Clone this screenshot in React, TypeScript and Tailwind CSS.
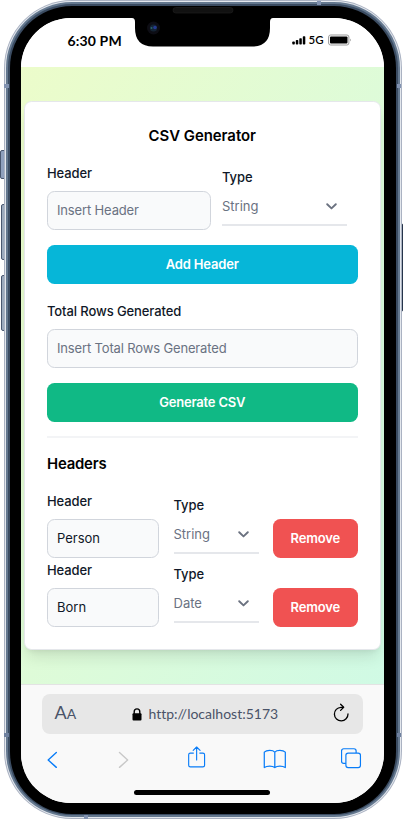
import type { ReactNode } from "react";

function Label({ children }: { children: ReactNode }) {
  return <div className="h-[19px] text-[13px] leading-[19px] font-medium tracking-[-0.1px] text-gray-900">{children}</div>;
}

function Select({ value }: { value: string }) {
  return (
    <div className="mt-[1px] flex h-[38px] items-center border-b-2 border-gray-200 text-[13px] text-gray-500">
      <span className="mt-[2px] flex-1">{value}</span>
      <svg className="mt-[1px] mr-[10px]" width="11" height="7" viewBox="0 0 11 7" fill="none" stroke="#6b7280" strokeWidth="1.9" strokeLinecap="round" strokeLinejoin="round">
        <path d="M1.2 1.2 5.5 5.4 9.8 1.2" />
      </svg>
    </div>
  );
}

function HeaderRow({ name, type }: { name: string; type: string }) {
  return (
    <div className="flex h-[69px] items-start">
      <div className="w-[112px]">
        <Label>Header</Label>
        <div className="mt-[8px] flex h-[39px] items-center rounded-[7.5px] border border-gray-300 bg-gray-50 px-[9px] text-[13px] text-gray-900">{name}</div>
      </div>
      <div className="mt-[4px] ml-[14.5px] w-[85px]">
        <Label>Type</Label>
        <Select value={type} />
      </div>
      <button className="mt-[27px] ml-auto h-[39px] w-[84.5px] rounded-[7.5px] bg-[#f05252] text-[13px] font-semibold tracking-[-0.15px] text-white">Remove</button>
    </div>
  );
}

function Card() {
  return (
    <div className="mx-[3px] mt-[34px] h-[549px] rounded-[7.5px] border border-gray-200 bg-white px-[22px] shadow-lg">
      <h1 className="mt-[23px] text-center text-[14.9px] leading-[22px] font-semibold text-black">CSV Generator</h1>
      <div className="mt-[17px] flex h-[81px]">
        <div className="w-[164px]">
          <Label>Header</Label>
          <div className="mt-[8px] flex h-[39px] items-center rounded-[7.5px] border border-gray-300 bg-gray-50 px-[9px] text-[13px] tracking-[-0.15px] text-gray-500">Insert Header</div>
        </div>
        <div className="mt-[4px] ml-[11px] w-[125px]">
          <Label>Type</Label>
          <Select value="String" />
        </div>
      </div>
      <button className="h-[39px] w-full rounded-[7.5px] bg-[#06b6d8] text-[13px] font-semibold tracking-[-0.15px] text-white">Add Header</button>
      <div className="mt-[18px]">
        <Label>Total Rows Generated</Label>
      </div>
      <div className="mt-[8px] flex h-[39px] items-center rounded-[7.5px] border border-gray-300 bg-gray-50 px-[9px] text-[13px] tracking-[-0.15px] text-gray-500">Insert Total Rows Generated</div>
      <button className="mt-[15px] h-[39px] w-full rounded-[7.5px] bg-[#10b985] text-[13px] font-semibold tracking-[-0.2px] text-white">Generate CSV</button>
      <div className="mt-[14px] h-[2px] bg-gray-100" />
      <h2 className="mt-[15px] mb-[17px] text-[14.9px] leading-[22px] font-semibold tracking-[-0.2px] text-black">Headers</h2>
      <HeaderRow name="Person" type="String" />
      <HeaderRow name="Born" type="Date" />
    </div>
  );
}

function StatusBar() {
  return (
    <div className="flex h-[49px] items-center bg-white pl-[46.5px] text-black">
      <span className="mt-[-4px] w-[224px] font-['Lato',sans-serif] text-[14px] font-bold tracking-[0.15px]">6:30 PM</span>
      <svg className="mt-[-4px]" width="14" height="9" viewBox="0 0 14 9">
        <rect x="0.3" y="5.5" width="2.5" height="3" rx="0.7" />
        <rect x="3.8" y="4" width="2.5" height="4.5" rx="0.7" />
        <rect x="7.3" y="2.2" width="2.5" height="6.3" rx="0.7" />
        <rect x="10.8" y="0.3" width="2.5" height="8.2" rx="0.7" />
      </svg>
      <span className="mt-[-5px] ml-[3px] w-[19px] font-['Lato',sans-serif] text-[11.5px] font-semibold">5G</span>
      <svg className="mt-[-5px]" width="24" height="12" viewBox="0 0 24 12">
        <rect x="0.6" y="1" width="20.3" height="10" rx="2" fill="#fff" stroke="#999" />
        <rect x="2" y="2.4" width="17.5" height="7.2" rx="1" />
        <path d="M22 4.5q1.6 1.5 0 3z" fill="#888" />
      </svg>
    </div>
  );
}

function BrowserBar() {
  return (
    <div className="h-[119px] border-t border-[#e3e3e3] bg-[#f9f9f9] px-[21px] pt-[9px]">
      <div className="flex h-[40px] items-center rounded-[8px] bg-[#e7e7e7] font-['Lato',sans-serif] text-[#4a5368]">
        <span className="mt-[-2px] ml-[12.5px] w-[77px] text-[18px] leading-[20px]">A<span className="text-[14px]">A</span></span>
        <svg width="10" height="13" viewBox="0 0 10 13">
          <rect x="0.5" y="5.3" width="9" height="7.2" rx="1" />
          <path d="M2.2 6V3.7a2.8 2.8 0 0 1 5.6 0V6" fill="none" stroke="#000" strokeWidth="1.4" />
        </svg>
        <span className="mt-[-2px] ml-[7px] w-[184px] text-[14px] [font-variant-ligatures:none]">http://localhost:5173</span>
        <svg className="mt-[-2px]" width="17" height="20" viewBox="0 0 17 20" fill="none" stroke="#000" strokeWidth="1.3" strokeLinecap="round" strokeLinejoin="round">
          <path d="M10 4.3H8A6.8 6.8 0 1 0 15 11" />
          <path d="M7.6 1.2 10.7 4.3 7.6 7.4" />
        </svg>
      </div>
      <div className="mt-[11px] flex h-[28px] items-center px-[1px] text-[#087cf8]">
        <svg className="mt-[2px] ml-[4px]" width="11" height="18" viewBox="0 0 11 18" fill="none" stroke="currentColor" strokeWidth="1.4" strokeLinecap="round" strokeLinejoin="round"><path d="M9.5 1.4 1.2 9l8.3 7.5" /></svg>
        <svg className="mt-[2px] ml-[60px]" width="11" height="18" viewBox="0 0 11 18" fill="none" stroke="#c8c8c8" strokeWidth="1.4" strokeLinecap="round" strokeLinejoin="round"><path d="M1.5 1.4 9.8 9l-8.3 7.5" /></svg>
        <svg className="mt-[-4px] ml-[58px]" width="20" height="24" viewBox="0 0 20 24" fill="none" stroke="currentColor" strokeWidth="1.15" strokeLinecap="round" strokeLinejoin="round">
          <path d="M6.5 8H3.4Q1.7 8 1.7 9.7v10.6Q1.7 22 3.4 22h12.8q1.7 0 1.7-1.7V9.7Q17.9 8 16.2 8H13M9.8 15V2M6.3 5.2 9.8 1.8l3.5 3.4" />
        </svg>
        <svg className="mt-[-1px] ml-[57px]" width="24" height="20" viewBox="0 0 24 20" fill="none" stroke="currentColor" strokeWidth="1.25" strokeLinejoin="round">
          <path d="M12 3Q10.500 1.300 6.800 1.300T1.300 3V18.700Q3.500 17.200 6.800 17.200T12 18.700ZM12 3Q13.500 1.300 17.200 1.300T22.700 3V18.700Q20.500 17.200 17.200 17.200T12 18.700" />
        </svg>
        <svg className="mt-[-2px] ml-[53px]" width="22" height="22" viewBox="0 0 22 22" fill="none" stroke="currentColor" strokeWidth="1.2">
          <rect x="6" y="6" width="14.8" height="14.8" rx="2.3" />
          <path d="M6 16.5H3.8q-2.2 0-2.2-2.2V3.8q0-2.2 2.2-2.2h10.4q2.2 0 2.2 2.2V6" />
        </svg>
      </div>
      <div className="mx-auto mt-[17px] h-[5px] w-[136px] rounded-full bg-black" />
    </div>
  );
}

export default function App() {
  return (
    <div className="relative h-[819px] w-[403px] overflow-hidden bg-white font-['Inter','Liberation_Sans',sans-serif]">
      <div className="absolute top-[150px] left-0 h-[29px] w-[6px] rounded-l-[2px] border border-[#4a5870] bg-[#8fa0bd]" />
      <div className="absolute top-[204px] left-[1px] h-[56px] w-[5px] rounded-l-[2px] border border-[#4a5870] bg-[#9baabd]" />
      <div className="absolute top-[275px] left-[1px] h-[56px] w-[5px] rounded-l-[2px] border border-[#4a5870] bg-[#9baabd]" />
      <div className="absolute top-[223px] left-[399px] h-[89px] w-[4px] rounded-r-[2px] border border-[#26344a] bg-[#8291a8]" />
      <div className="relative ml-[4px] h-[819px] w-[397.5px] rounded-[68px] bg-[#aab2c2] p-[1px]">
        <div className="h-full rounded-[67px] bg-[#e3e7ed] p-[1px]">
          <div className="h-full rounded-[66px] bg-[#64788f] p-[2px]">
            <div className="h-full rounded-[64px] bg-[#3b4c62] p-[1.5px]">
              <div className="h-full rounded-[62px] bg-black pt-[12.5px] pr-[12.5px] pb-[10.5px] pl-[11.5px]">
                <div className="h-[785px] w-[362.5px] overflow-hidden rounded-[50px] bg-white">
                  <StatusBar />
                  <div className="flow-root h-[617px] bg-gradient-to-br from-lime-100 to-emerald-100">
                    <Card />
                  </div>
                  <BrowserBar />
                </div>
              </div>
            </div>
          </div>
        </div>
      </div>
      <svg className="absolute top-[7px] left-[130px]" width="145" height="40" viewBox="0 0 145 40">
        <path d="M2 0V11q3 0 3 4v6q0 18.500 18 18.500h99q18 0 18-18.500v-6q0-4 3-4V0Z" fill="#000" />
        <rect x="43" y="0.5" width="60" height="5.500" rx="2.700" fill="#111" stroke="#222" strokeWidth="0.6" />
        <circle cx="23.500" cy="21" r="6.500" fill="#0d0d14" />
        <circle cx="23.500" cy="21" r="3.600" fill="#142434" />
        <circle cx="25" cy="20.500" r="1.800" fill="#253a91" />
        <circle cx="21.500" cy="21" r="1" fill="#28656d" />
      </svg>
      <div className="absolute top-[84px] left-[4px] h-[4px] w-[5px] bg-[#8293b1]" />
      <div className="absolute top-[84px] left-[397px] h-[4px] w-[4px] bg-[#8293b1]" />
      <div className="absolute top-[733px] left-[4px] h-[4px] w-[5px] bg-[#6f819f]" />
      <div className="absolute top-[733px] left-[397px] h-[4px] w-[4px] bg-[#6f819f]" />
      <div className="absolute top-[1px] left-[317px] h-[4px] w-[4px] bg-[#8293b1]" />
      <div className="absolute top-[815px] left-[84px] h-[4px] w-[4px] bg-[#8293b1]" />
    </div>
  );
}
